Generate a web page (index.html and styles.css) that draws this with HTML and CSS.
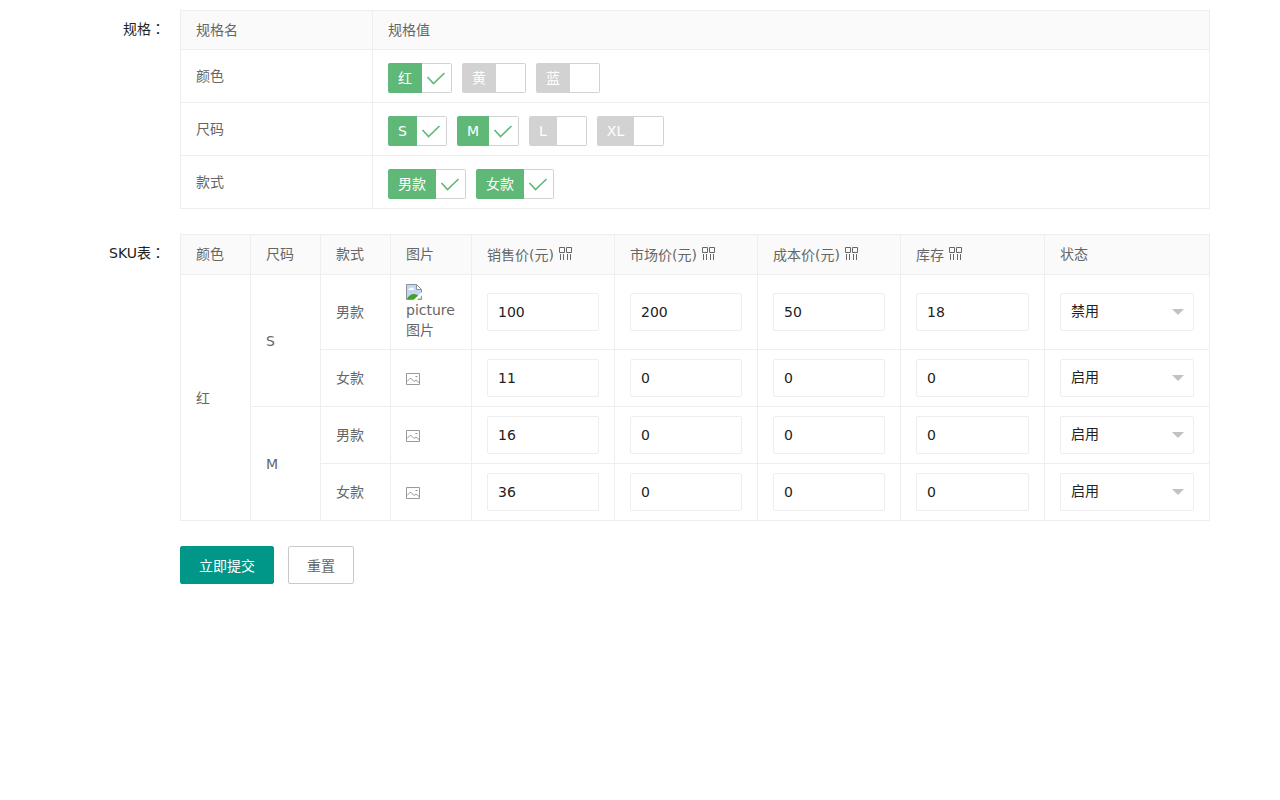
FILE: index.html
```
<!DOCTYPE html>
<html lang="zh-CN">
<head>
<meta charset="utf-8">
<title>SKU</title>
<link rel="stylesheet" href="styles.css">
</head>
<body>
<svg class="defs" aria-hidden="true">
  <symbol id="check" viewBox="0 0 28 28"><path d="M4.500 13l6 6.500L21.500 9" fill="none" stroke="#5fb878" stroke-width="1.600"/></symbol>
  <symbol id="batch" viewBox="0 0 14 14"><path d="M.5.5h5v5h-5zM7.500.5h5v5h-5zM1.500 7v6M4.500 7v6M8.500 7v6M11.500 7v6" fill="none" stroke="#666"/></symbol>
  <symbol id="picture" viewBox="0 0 14 12"><path d="M.5.5h13v11H.5zM1 8.500L4.500 5l3.500 3.500 2-1.500 3.500 3M9.500 3.500h2" fill="none" stroke="#999"/></symbol>
  <symbol id="broken" viewBox="0 0 16 16">
    <path d="M.5.5h10l5 5v10H.5z" fill="#c3d5f4"/>
    <path d="M2.500 6c0-2 1.500-2 2-1.500C5 3 7.500 3 7.500 4.800 9 5 8.500 6 8 6z" fill="#fff"/>
    <path d="M1 15c1-3 4-5 7-5 2 0 4 1 5 2.500V15z" fill="#43a02c"/>
    <path d="M.5 15.500V.5h10l5 5v10z" fill="none" stroke="#8d929b"/>
    <path d="M10.500.5v5h5z" fill="#fff" stroke="#8d929b"/>
    <path d="M7.500 16L16 8v3.500L11 16z" fill="#fff"/>
  </symbol>
</svg>
<form class="form">
  <div class="item">
    <span class="label" lang="zh-TW">规格：</span>
    <table class="table">
      <colgroup><col class="col-name"><col></colgroup>
      <thead><tr><th>规格名</th><th>规格值</th></tr></thead>
      <tbody>
        <tr><td>颜色</td><td><div class="chips">
          <label class="chip"><input type="checkbox" checked><span>红</span><svg><use href="#check"/></svg></label>
          <label class="chip"><input type="checkbox"><span>黄</span><svg><use href="#check"/></svg></label>
          <label class="chip"><input type="checkbox"><span>蓝</span><svg><use href="#check"/></svg></label>
        </div></td></tr>
        <tr><td>尺码</td><td><div class="chips">
          <label class="chip"><input type="checkbox" checked><span>S</span><svg><use href="#check"/></svg></label>
          <label class="chip"><input type="checkbox" checked><span>M</span><svg><use href="#check"/></svg></label>
          <label class="chip"><input type="checkbox"><span>L</span><svg><use href="#check"/></svg></label>
          <label class="chip"><input type="checkbox"><span>XL</span><svg><use href="#check"/></svg></label>
        </div></td></tr>
        <tr><td>款式</td><td><div class="chips">
          <label class="chip"><input type="checkbox" checked><span>男款</span><svg><use href="#check"/></svg></label>
          <label class="chip"><input type="checkbox" checked><span>女款</span><svg><use href="#check"/></svg></label>
        </div></td></tr>
      </tbody>
    </table>
  </div>
  <div class="item">
    <span class="label" lang="zh-TW">SKU表：</span>
    <table class="table">
      <colgroup><col class="col-spec"><col class="col-spec"><col class="col-spec"><col class="col-pic"><col class="col-num"><col class="col-num"><col class="col-num"><col class="col-stock"><col></colgroup>
      <thead><tr>
        <th>颜色</th><th>尺码</th><th>款式</th><th>图片</th>
        <th><span class="head">销售价(元)<svg><use href="#batch"/></svg></span></th>
        <th><span class="head">市场价(元)<svg><use href="#batch"/></svg></span></th>
        <th><span class="head">成本价(元)<svg><use href="#batch"/></svg></span></th>
        <th><span class="head">库存<svg><use href="#batch"/></svg></span></th>
        <th>状态</th>
      </tr></thead>
      <tbody>
        <tr>
          <td rowspan="4">红</td><td rowspan="2">S</td><td>男款</td>
          <td><div class="missing"><svg><use href="#broken"/></svg>picture图片</div></td>
          <td><input class="input" aria-label="销售价" value="100"></td>
          <td><input class="input" aria-label="市场价" value="200"></td>
          <td><input class="input" aria-label="成本价" value="50"></td>
          <td><input class="input" aria-label="库存" value="18"></td>
          <td><div class="select"><select aria-label="状态"><option>启用</option><option selected>禁用</option></select></div></td>
        </tr>
        <tr>
          <td>女款</td><td><svg class="pic"><use href="#picture"/></svg></td>
          <td><input class="input" aria-label="销售价" value="11"></td>
          <td><input class="input" aria-label="市场价" value="0"></td>
          <td><input class="input" aria-label="成本价" value="0"></td>
          <td><input class="input" aria-label="库存" value="0"></td>
          <td><div class="select"><select aria-label="状态"><option selected>启用</option><option>禁用</option></select></div></td>
        </tr>
        <tr>
          <td rowspan="2">M</td><td>男款</td><td><svg class="pic"><use href="#picture"/></svg></td>
          <td><input class="input" aria-label="销售价" value="16"></td>
          <td><input class="input" aria-label="市场价" value="0"></td>
          <td><input class="input" aria-label="成本价" value="0"></td>
          <td><input class="input" aria-label="库存" value="0"></td>
          <td><div class="select"><select aria-label="状态"><option selected>启用</option><option>禁用</option></select></div></td>
        </tr>
        <tr>
          <td>女款</td><td><svg class="pic"><use href="#picture"/></svg></td>
          <td><input class="input" aria-label="销售价" value="36"></td>
          <td><input class="input" aria-label="市场价" value="0"></td>
          <td><input class="input" aria-label="成本价" value="0"></td>
          <td><input class="input" aria-label="库存" value="0"></td>
          <td><div class="select"><select aria-label="状态"><option selected>启用</option><option>禁用</option></select></div></td>
        </tr>
      </tbody>
    </table>
  </div>
  <div class="actions">
    <button type="submit" class="btn primary">立即提交</button>
    <button type="reset" class="btn">重置</button>
  </div>
</form>
</body>
</html>
```
FILE: styles.css
```
* { box-sizing: border-box; }
body {
  margin: 0;
  color: #222;
  font: 14px/20px "DejaVu Sans", "Noto Sans CJK SC", sans-serif;
}
input, select, button { font: inherit; margin: 0; }
svg { display: block; flex: none; }
.defs { position: absolute; width: 0; height: 0; }

.form { padding: 10px 70px; }
.item { display: flex; align-items: flex-start; margin-bottom: 25px; }
.label {
  flex: none;
  width: 110px;
  padding: 9px 15px 9px 0;
  font-family: "DejaVu Sans", "Noto Sans CJK TC", sans-serif;
  text-align: right;
}

.table {
  flex: 1;
  width: 100%;
  min-width: 0;
  table-layout: fixed;
  border-collapse: collapse;
  color: #666;
}
.table th, .table td {
  padding: 9px 15px;
  border: 1px solid #eee;
  font-weight: 400;
  text-align: left;
  vertical-align: middle;
}
.table th { vertical-align: top; }
.table thead { background: #fafafa; }
.col-name { width: 192px; }
.col-spec { width: 70px; }
.col-pic { width: 81px; }
.col-num { width: 143px; }
.col-stock { width: 144px; }

.chips { display: flex; gap: 10px; padding-top: 4px; }
.chip { position: relative; display: flex; flex-direction: row-reverse; height: 30px; cursor: pointer; }
.chip span {
  padding: 0 10px;
  line-height: 30px;
  color: #fff;
  background: #d2d2d2;
  border-radius: 2px 0 0 2px;
}
.chip input {
  appearance: none;
  width: 30px;
  height: 30px;
  border: 1px solid #d2d2d2;
  border-left: 0;
  border-radius: 0 2px 2px 0;
  background: #fff;
}
.chip svg { display: none; position: absolute; top: 1px; right: 1px; width: 28px; height: 28px; }
.chip input:checked ~ span { background: #5fb878; }
.chip input:checked ~ svg { display: block; }

.head { display: flex; gap: 5px; padding-top: 1px; }
.head svg { width: 14px; height: 14px; margin-top: 2px; }
.missing svg { width: 16px; height: 16px; }
.pic { width: 14px; height: 12px; margin-top: 2px; }

.input, .select select {
  display: block;
  width: 100%;
  height: 38px;
  padding: 0 10px;
  border: 1px solid #eee;
  border-radius: 2px;
  background: #fff;
  color: #222;
}
.select { position: relative; }
.select select { appearance: none; padding-bottom: 2px; }
.select::after {
  content: "";
  position: absolute;
  top: 16px;
  right: 10px;
  border: 6px solid transparent;
  border-top-color: #c2c2c2;
  border-bottom: 0;
  pointer-events: none;
}

.actions { display: flex; gap: 14px; padding-left: 110px; }
.btn {
  height: 38px;
  padding: 2px 18px 0;
  border: 1px solid #c9c9c9;
  border-radius: 2px;
  background: #fff;
  color: #666;
  cursor: pointer;
}
.primary { border-color: #009688; background: #009688; color: #fff; }
```
